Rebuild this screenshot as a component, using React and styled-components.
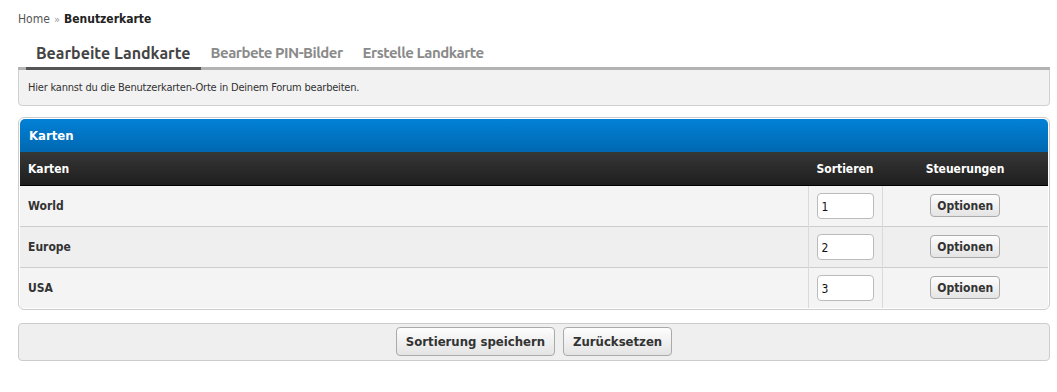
import React from "react";
import styled, { createGlobalStyle } from "styled-components";

const GlobalStyle = createGlobalStyle`
    body {
        margin: 0;
        background: #fff;
        font-family: Tahoma, "DejaVu Sans Condensed", "DejaVu Sans", sans-serif;
        color: #333;
    }
`;

const maps = [
    { name: "World", order: 1 },
    { name: "Europe", order: 2 },
    { name: "USA", order: 3 },
];

export default function App() {
    return (
        <Page>
            <GlobalStyle />
            <Breadcrumb>
                <a href="#home">Home</a>
                <span className="sep">»</span>
                <strong>Benutzerkarte</strong>
            </Breadcrumb>

            <Tabs>
                <Tab $active>Bearbeite Landkarte</Tab>
                <Tab>Bearbete PIN-Bilder</Tab>
                <Tab>Erstelle Landkarte</Tab>
            </Tabs>
            <Description>Hier kannst du die Benutzerkarten-Orte in Deinem Forum bearbeiten.</Description>

            <Box>
                <BoxTitle>Karten</BoxTitle>
                <Table>
                    <thead>
                        <tr>
                            <Th>Karten</Th>
                            <Th $width="73px" $center>Sortieren</Th>
                            <Th $width="166px" $center>Steuerungen</Th>
                        </tr>
                    </thead>
                    <tbody>
                        {maps.map((m, i) => (
                            <Row key={m.name} $alt={i % 2 === 1}>
                                <Td><strong>{m.name}</strong></Td>
                                <Td $center><OrderInput defaultValue={m.order} /></Td>
                                <Td $center><Button $small>Optionen</Button></Td>
                            </Row>
                        ))}
                    </tbody>
                </Table>
            </Box>

            <ButtonBar>
                <Button>Sortierung speichern</Button>
                <Button>Zurücksetzen</Button>
            </ButtonBar>
        </Page>
    );
}

const Page = styled.div`
    padding: 11px 7px 0 18px;
`;

const Breadcrumb = styled.div`
    font-size: 12px;
    line-height: 16px;
    color: #555;

    a {
        color: #555;
        text-decoration: none;
    }

    .sep {
        color: #999;
        margin: 0 4px;
        font-size: 11px;
    }

    strong {
        color: #222;
    }
`;

const Tabs = styled.div`
    position: relative;
    z-index: 1;
    display: flex;
    margin-top: 12px;
    padding-left: 8px;
    border-bottom: 3px solid #b3b3b3;
    font-family: Ubuntu, "Open Sans", "Noto Sans", sans-serif;
`;

const Tab = styled.div`
    font-size: ${p => (p.$active ? "16px" : "15px")};
    line-height: 22px;
    padding: 2px 10px 3px;
    margin-bottom: -3px;
    color: ${p => (p.$active ? "#444" : "#8a8a8a")};
    font-weight: 600;
    border-bottom: 3px solid ${p => (p.$active ? "#555" : "transparent")};
    letter-spacing: ${p => (p.$active ? "0" : "-0.5px")};
`;

const Description = styled.div`
    margin-top: -3px;
    background: #f2f2f2;
    border: 1px solid #d0d0d0;
    border-radius: 4px;
    padding: 13px 9px 10px;
    font-size: 11px;
    line-height: 14px;
    letter-spacing: -0.2px;
    color: #333;
`;

const Box = styled.div`
    margin-top: 11px;
    border: 1px solid #ccc;
    border-radius: 6px;
    padding: 1px;
    background: #fff;
    overflow: hidden;
`;

const BoxTitle = styled.div`
    background: linear-gradient(#0281d6, #0068b1);
    border-radius: 5px 5px 0 0;
    color: #fff;
    font-weight: bold;
    font-size: 13px;
    line-height: 33px;
    padding: 0 9px;
    border-bottom: 1px solid #2f3a32;
`;

const Table = styled.table`
    width: 100%;
    border-collapse: collapse;
    font-size: 12px;

    tbody tr + tr td {
        border-top: 1px solid #cdcdcd;
    }

    tbody td + td {
        border-left: 1px solid #dadada;
    }
`;

const Th = styled.th`
    box-sizing: border-box;
    background: linear-gradient(#363636, #1e1e1e);
    color: #fff;
    font-weight: bold;
    text-align: ${p => (p.$center ? "center" : "left")};
    height: 32px;
    padding: 0 8px;
    width: ${p => p.$width || "auto"};
    border-bottom: 1px solid #000;
`;

const Row = styled.tr`
    background: ${p => (p.$alt ? "#efefef" : "#f4f4f4")};
`;

const Td = styled.td`
    height: 40px;
    padding: 0 8px;
    color: #333;
    text-align: ${p => (p.$center ? "center" : "left")};
`;

const OrderInput = styled.input`
    box-sizing: border-box;
    width: 57px;
    height: 26px;
    border: 1px solid #bbb;
    border-radius: 4px;
    padding: 2px 4px 0;
    font-family: Tahoma, "DejaVu Sans Condensed", "DejaVu Sans", sans-serif;
    font-size: 12px;
    color: #111;
    background: #fff;
`;

const Button = styled.button`
    font-family: Tahoma, "DejaVu Sans Condensed", "DejaVu Sans", sans-serif;
    font-weight: bold;
    font-size: ${p => (p.$small ? "12px" : "13px")};
    color: #333;
    height: ${p => (p.$small ? "23px" : "29px")};
    padding: ${p => (p.$small ? "0 6px" : "0 9px")};
    border: 1px solid #aaa;
    border-radius: 4px;
    background: linear-gradient(#fdfdfd, #e4e4e4);
    cursor: pointer;
`;

const ButtonBar = styled.div`
    margin-top: 13px;
    display: flex;
    justify-content: center;
    gap: 8px;
    padding: 3px 4px 4px;
    background: #efefef;
    border: 1px solid #ccc;
    border-radius: 4px;
`;
